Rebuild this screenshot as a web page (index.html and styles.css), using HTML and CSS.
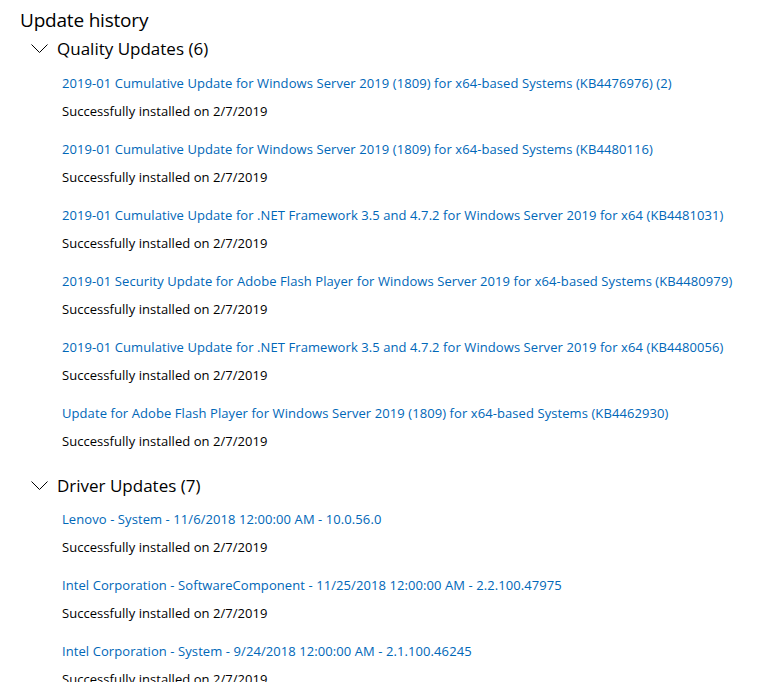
FILE: index.html
```html
<!DOCTYPE html>
<html lang="en">
<head>
  <meta charset="UTF-8" />
  <title>Update history</title>
  <link rel="stylesheet" href="styles.css">
</head>
<body>
  <div class="page">
    <h1>Update history</h1>

    <div class="group">
      <div class="group-head">
        <svg class="chevron" width="18" height="10" viewBox="0 0 18 10"><polyline points="0.5,0.5 8.5,8.5 16.5,0.5" /></svg>
        <span>Quality Updates (6)</span>
      </div>
      <ul class="items">
        <li><a href="#">2019-01 Cumulative Update for Windows Server 2019 (1809) for x64-based Systems (KB4476976) (2)</a><p>Successfully installed on 2/7/2019</p></li>
        <li><a href="#">2019-01 Cumulative Update for Windows Server 2019 (1809) for x64-based Systems (KB4480116)</a><p>Successfully installed on 2/7/2019</p></li>
        <li><a href="#">2019-01 Cumulative Update for .NET Framework 3.5 and 4.7.2 for Windows Server 2019 for x64 (KB4481031)</a><p>Successfully installed on 2/7/2019</p></li>
        <li><a href="#">2019-01 Security Update for Adobe Flash Player for Windows Server 2019 for x64-based Systems (KB4480979)</a><p>Successfully installed on 2/7/2019</p></li>
        <li><a href="#">2019-01 Cumulative Update for .NET Framework 3.5 and 4.7.2 for Windows Server 2019 for x64 (KB4480056)</a><p>Successfully installed on 2/7/2019</p></li>
        <li><a href="#">Update for Adobe Flash Player for Windows Server 2019 (1809) for x64-based Systems (KB4462930)</a><p>Successfully installed on 2/7/2019</p></li>
      </ul>
    </div>

    <div class="group">
      <div class="group-head">
        <svg class="chevron" width="18" height="10" viewBox="0 0 18 10"><polyline points="0.5,0.5 8.5,8.5 16.5,0.5" /></svg>
        <span>Driver Updates (7)</span>
      </div>
      <ul class="items">
        <li><a href="#">Lenovo - System - 11/6/2018 12:00:00 AM - 10.0.56.0</a><p>Successfully installed on 2/7/2019</p></li>
        <li><a href="#">Intel Corporation - SoftwareComponent - 11/25/2018 12:00:00 AM - 2.2.100.47975</a><p>Successfully installed on 2/7/2019</p></li>
        <li><a href="#">Intel Corporation - System - 9/24/2018 12:00:00 AM - 2.1.100.46245</a><p>Successfully installed on 2/7/2019</p></li>
      </ul>
    </div>
  </div>
</body>
</html>
```

FILE: styles.css
```css
body {
  margin: 0;
  background: #fff;
  color: #000;
  font-family: "Open Sans", "Noto Sans", sans-serif;
  overflow: hidden;
}

.page {
  padding: 6px 0 0 20px;
}

h1 {
  margin: 0;
  font-size: 19px;
  font-weight: 400;
  line-height: 28px;
  letter-spacing: -0.2px;
}

.group-head {
  display: flex;
  align-items: center;
  gap: 8px;
  margin-top: 1px;
  margin-left: 11px;
  font-size: 17px;
  line-height: 28px;
}

.chevron {
  fill: none;
  stroke: #000;
  stroke-width: 1;
}

.items {
  list-style: none;
  margin: 10px 0 0 42px;
  padding: 0;
}

.items li {
  margin-bottom: 18px;
}

.items a {
  display: block;
  color: #0067b8;
  text-decoration: none;
  font-size: 13px;
  line-height: 20px;
  letter-spacing: 0.08px;
}

.items p {
  margin: 8px 0 0;
  font-size: 13px;
  line-height: 20px;
  letter-spacing: 0.05px;
}

.group + .group {
  margin-top: 21px;
}

.group + .group .items {
  margin-top: 9px;
}
```
